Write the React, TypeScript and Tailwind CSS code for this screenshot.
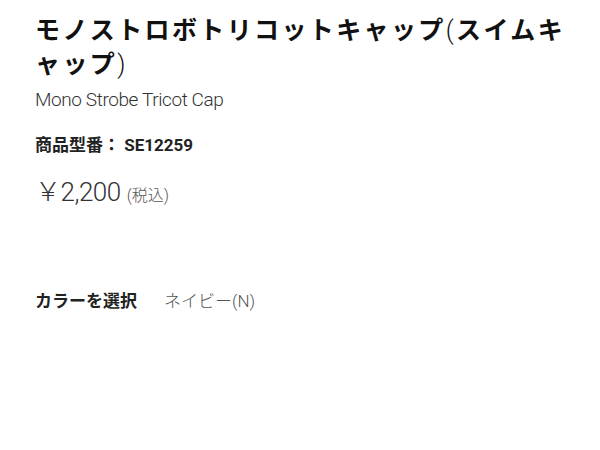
export default function App() {
  return (
    <div className="w-[600px] h-[450px] bg-white px-[35px] pt-[14px]" style={{ fontFamily: 'Roboto, "Noto Sans CJK JP", sans-serif' }}>
      <h1 className="text-[25px] font-bold leading-[34px] tracking-[0.095em] text-[#111]">
        モノストロボトリコットキャップ<span className="font-light">(</span>スイムキャップ<span className="font-light">)</span>
      </h1>
      <p className="mt-[5px] text-[19px] font-light leading-[26px] tracking-[-0.4px] text-[#333]">Mono Strobe Tricot Cap</p>
      <p className="mt-[20px] text-[17px] font-bold leading-[24px] text-[#222]">商品型番： SE12259</p>
      <p className="mt-[18px] leading-[34px] text-[#333]">
        <span className="text-[26px] font-light tracking-[-0.5px]">￥2,200</span>
        <span className="ml-[6px] text-[16px] font-light text-[#555]">(税込)</span>
      </p>
      <div className="mt-[76px] flex items-center text-[17px] leading-[24px]">
        <span className="font-bold text-[#222]">カラーを選択</span>
        <span className="ml-[27px] font-light text-[#555]">ネイビー(N)</span>
      </div>
    </div>
  );
}
